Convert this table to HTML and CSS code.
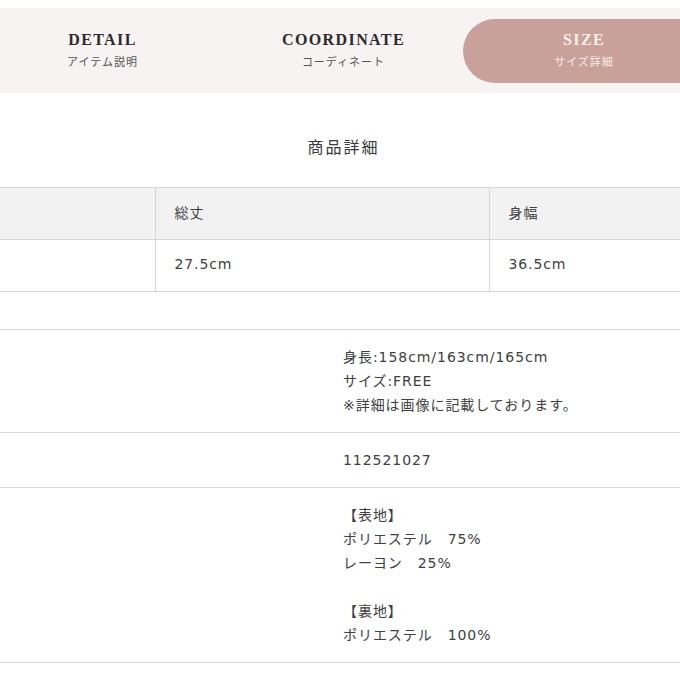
FILE: index.html
```html
<!DOCTYPE html>
<html lang="ja">
<head>
<meta charset="utf-8">
<link rel="stylesheet" href="styles.css">
</head>
<body>
<div class="page">
  <nav class="tabs">
    <div class="tab">
      <span class="tab-en">DETAIL</span>
      <span class="tab-ja">アイテム説明</span>
    </div>
    <div class="tab">
      <span class="tab-en">COORDINATE</span>
      <span class="tab-ja">コーディネート</span>
    </div>
    <div class="tab tab-active">
      <span class="tab-en">SIZE</span>
      <span class="tab-ja">サイズ詳細</span>
    </div>
  </nav>

  <h2 class="title">商品詳細</h2>

  <table class="size-table">
    <tr class="size-head">
      <td class="c1"></td>
      <td class="c2">総丈</td>
      <td class="c3">身幅</td>
    </tr>
    <tr>
      <td class="c1"></td>
      <td class="c2">27.5cm</td>
      <td class="c3">36.5cm</td>
    </tr>
  </table>

  <div class="spec">
    <div class="spec-row">
      <div class="spec-label"></div>
      <div class="spec-value">
        <p>身長:158cm/163cm/165cm</p>
        <p>サイズ:FREE</p>
        <p>※詳細は画像に記載しております。</p>
      </div>
    </div>
    <div class="spec-row">
      <div class="spec-label"></div>
      <div class="spec-value">
        <p>112521027</p>
      </div>
    </div>
    <div class="spec-row">
      <div class="spec-label"></div>
      <div class="spec-value">
        <p>【表地】</p>
        <p>ポリエステル　75%</p>
        <p>レーヨン　25%</p>
        <p>&nbsp;</p>
        <p>【裏地】</p>
        <p>ポリエステル　100%</p>
      </div>
    </div>
  </div>
</div>
</body>
</html>
```

FILE: styles.css
```css
html, body {
  margin: 0;
  padding: 0;
  background: #ffffff;
  overflow: hidden;
}

.page {
  width: 723px;
  margin-left: -18px;
  padding-top: 8px;
  font-family: "Noto Sans CJK JP", "Noto Sans", sans-serif;
  color: #3a3a3a;
}

.tabs {
  display: grid;
  grid-template-columns: 241px 241px 241px;
  height: 85px;
  align-items: center;
  background: #f6f3f2;
  border-radius: 18px 0 0 18px;
  box-sizing: border-box;
}

.tab {
  display: flex;
  flex-direction: column;
  align-items: center;
  justify-content: center;
  height: 64px;
  padding-bottom: 3px;
  box-sizing: border-box;
}

.tab-en {
  font-family: "Liberation Serif", "DejaVu Serif", serif;
  font-weight: bold;
  font-size: 16px;
  letter-spacing: 1.4px;
  color: #2b2b2b;
  line-height: 20px;
}

.tab-ja {
  font-size: 11px;
  letter-spacing: 1px;
  color: #555;
  line-height: 16px;
  margin-top: 3px;
}

.tab-active {
  background: #c9a19b;
  border-radius: 32px 0 0 32px;
  margin-left: -1px;
}

.tab-active .tab-en {
  color: #f8eeea;
}

.tab-active .tab-ja {
  color: #f6ebe7;
}

.title {
  margin: 0;
  padding-top: 42px;
  height: 52px;
  text-align: center;
  font-weight: normal;
  font-size: 16px;
  letter-spacing: 2px;
  line-height: 22px;
  color: #3a3a3a;
}

.size-table {
  border-collapse: collapse;
  margin-left: 18px;
  width: 705px;
  font-family: "DejaVu Sans", "Noto Sans CJK JP", sans-serif;
  font-size: 14px;
  letter-spacing: 0.9px;
  color: #404040;
}

.size-table td {
  border-top: 1px solid #d6d6d6;
  border-bottom: 1px solid #d6d6d6;
  height: 52px;
  padding: 0 0 3px 19px;
  box-sizing: border-box;
  vertical-align: middle;
}

.size-table .c1 {
  width: 155px;
  padding: 0;
  border-right: 1px solid #d6d6d6;
}

.size-table .c2 {
  width: 334px;
  border-right: 1px solid #d6d6d6;
}

.size-head td {
  background: #f2f2f2;
}

.spec {
  margin-top: 37px;
  margin-left: 18px;
  font-family: "DejaVu Sans", "Noto Sans CJK JP", sans-serif;
  font-size: 14px;
  letter-spacing: 0.95px;
  color: #404040;
}

.spec-row {
  display: flex;
  border-top: 1px solid #d6d6d6;
  padding: 15px 0 15px;
}

.spec-row:last-child {
  border-bottom: 1px solid #d6d6d6;
}

.spec-label {
  width: 343px;
  flex: none;
}

.spec-value p {
  margin: 0;
  line-height: 24px;
}
```
